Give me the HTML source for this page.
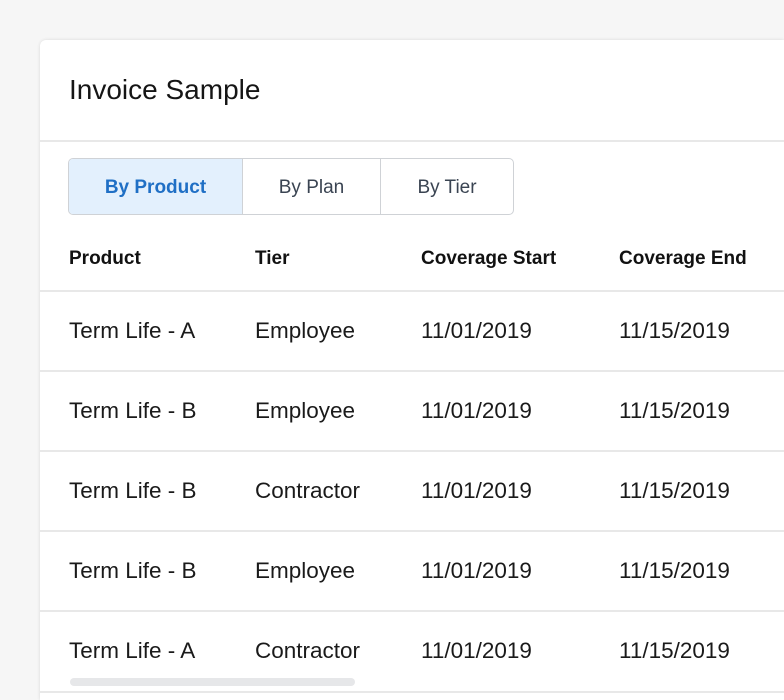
<!DOCTYPE html>
<html style="width:784px;height:700px;overflow:hidden"><head><style>
body{margin:0;width:784px;height:700px;background:#f6f6f6;font-family:"Liberation Sans",sans-serif;overflow:hidden;position:relative}
.card{position:absolute;left:40px;top:40px;width:744px;height:660px;background:#fff;border-radius:6px 0 0 0;box-shadow:0 0 3px rgba(0,0,0,.12);overflow:hidden}
.title{position:absolute;left:29px;top:34px;font-size:28px;color:#151515}
.hl{position:absolute;left:0;width:760px;height:2px;background:#e8e8e8}
.tabs{position:absolute;left:28px;top:118px;width:444px;height:55px;border:1px solid #cfd2d6;border-radius:5px;display:flex;overflow:hidden}
.tabs div{display:flex;align-items:center;justify-content:center;font-size:19px;color:#3a4452;border-left:1px solid #cfd2d6;padding-top:2px;box-sizing:border-box}
.tabs div:first-child{border-left:none;background:#e3f0fd;color:#1f6fc5;font-weight:bold}
.t{position:absolute;font-size:22.5px;color:#1a1a1a;margin-top:0px}
.h{position:absolute;font-size:19px;font-weight:bold;color:#111;margin-top:0px}
.sb{position:absolute;left:30px;top:638px;width:285px;height:8px;border-radius:4px;background:#e6e7e9}
</style></head><body>
<div class="card">
<div class="title">Invoice Sample</div>
<div class="hl" style="top:100px"></div>
<div class="tabs"><div style="width:173px">By Product</div><div style="width:138px">By Plan</div><div style="width:133px">By Tier</div></div>
<div class="h" style="left:29px;top:208px">Product</div>
<div class="h" style="left:215px;top:208px">Tier</div>
<div class="h" style="left:381px;top:208px">Coverage Start</div>
<div class="h" style="left:579px;top:208px">Coverage End</div>
<div class="hl" style="top:250px"></div>
<div class="t" style="left:29px;top:278px">Term Life - A</div><div class="t" style="left:215px;top:278px">Employee</div><div class="t" style="left:381px;top:278px">11/01/2019</div><div class="t" style="left:579px;top:278px">11/15/2019</div>
<div class="hl" style="top:330px"></div>
<div class="t" style="left:29px;top:358px">Term Life - B</div><div class="t" style="left:215px;top:358px">Employee</div><div class="t" style="left:381px;top:358px">11/01/2019</div><div class="t" style="left:579px;top:358px">11/15/2019</div>
<div class="hl" style="top:410px"></div>
<div class="t" style="left:29px;top:438px">Term Life - B</div><div class="t" style="left:215px;top:438px">Contractor</div><div class="t" style="left:381px;top:438px">11/01/2019</div><div class="t" style="left:579px;top:438px">11/15/2019</div>
<div class="hl" style="top:490px"></div>
<div class="t" style="left:29px;top:518px">Term Life - B</div><div class="t" style="left:215px;top:518px">Employee</div><div class="t" style="left:381px;top:518px">11/01/2019</div><div class="t" style="left:579px;top:518px">11/15/2019</div>
<div class="hl" style="top:570px"></div>
<div class="t" style="left:29px;top:598px">Term Life - A</div><div class="t" style="left:215px;top:598px">Contractor</div><div class="t" style="left:381px;top:598px">11/01/2019</div><div class="t" style="left:579px;top:598px">11/15/2019</div>
<div class="sb"></div>
<div class="hl" style="top:651px"></div>
</div>
</body></html>
